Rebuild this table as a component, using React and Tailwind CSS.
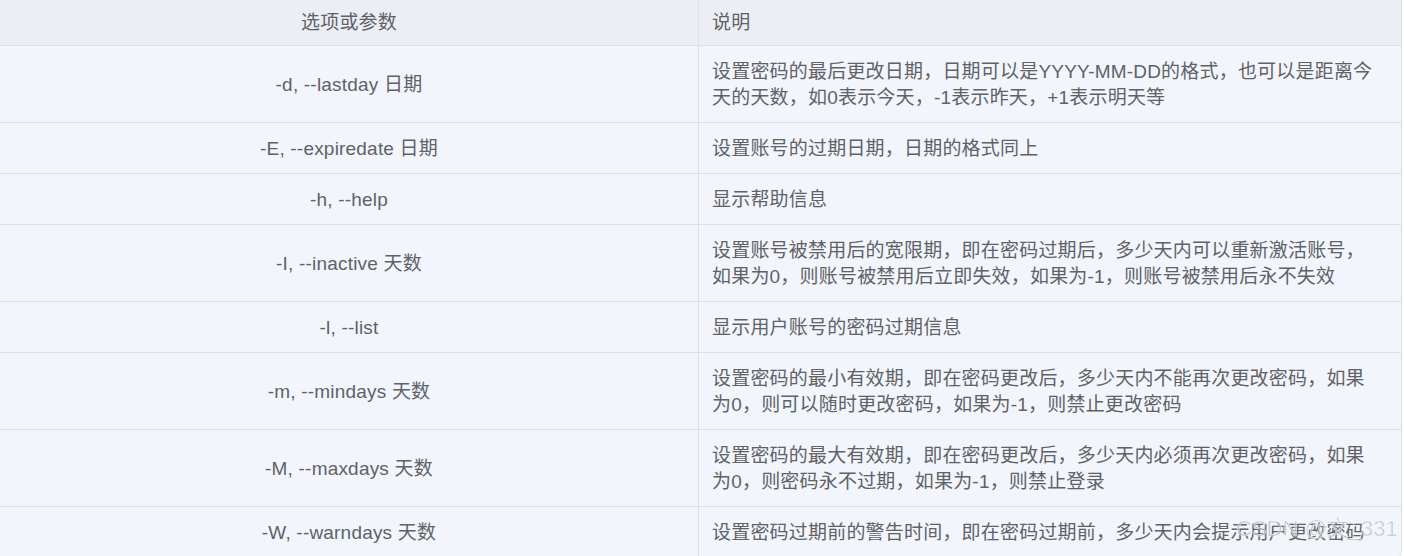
const rows = [
  { opt: '-d, --lastday 日期', desc: ['设置密码的最后更改日期，日期可以是YYYY-MM-DD的格式，也可以是距离今', '天的天数，如0表示今天，-1表示昨天，+1表示明天等'] },
  { opt: '-E, --expiredate 日期', desc: ['设置账号的过期日期，日期的格式同上'] },
  { opt: '-h, --help', desc: ['显示帮助信息'] },
  { opt: '-I, --inactive 天数', desc: ['设置账号被禁用后的宽限期，即在密码过期后，多少天内可以重新激活账号，', '如果为0，则账号被禁用后立即失效，如果为-1，则账号被禁用后永不失效'] },
  { opt: '-l, --list', desc: ['显示用户账号的密码过期信息'] },
  { opt: '-m, --mindays 天数', desc: ['设置密码的最小有效期，即在密码更改后，多少天内不能再次更改密码，如果', '为0，则可以随时更改密码，如果为-1，则禁止更改密码'] },
  { opt: '-M, --maxdays 天数', desc: ['设置密码的最大有效期，即在密码更改后，多少天内必须再次更改密码，如果', '为0，则密码永不过期，如果为-1，则禁止登录'] },
  { opt: '-W, --warndays 天数', desc: ['设置密码过期前的警告时间，即在密码过期前，多少天内会提示用户更改密码'] },
];

const font = { fontFamily: '"Liberation Sans", Arial, "Noto Sans CJK SC", sans-serif' };

export default function App() {
  return (
    <div className="relative w-[1404px] h-[556px] overflow-hidden bg-white" style={font}>
      <div className="w-[1402px] border-r border-b border-[#dcdfe6] rounded-br-[6px] overflow-hidden text-[19px] leading-[26px] text-[#606266] tracking-[0.2px]">
        <div className="grid grid-cols-[699px_1fr] bg-[#ebeef5] border-b border-[#dcdfe6]">
          <div className="pt-[10px] pb-[9px] text-center border-r border-[#dcdfe6]">选项或参数</div>
          <div className="pt-[10px] pb-[9px] px-[13px]">说明</div>
        </div>
        {rows.map((r, i) => (
          <div
            key={r.opt}
            className={`grid grid-cols-[699px_1fr] bg-[#f2f5fc] ${i < rows.length - 1 ? 'border-b border-[#dcdfe6]' : ''}`}
          >
            <div className="flex items-center justify-center pt-[13px] pb-[11px] border-r border-[#dcdfe6]">{r.opt}</div>
            <div className="pt-[13px] pb-[11px] px-[13px]">
              {r.desc.map((line) => (
                <div key={line} className="whitespace-nowrap">{line}</div>
              ))}
            </div>
          </div>
        ))}
      </div>
      {/* watermark */}
      <span className="pointer-events-none absolute left-[1236px] top-[515px] text-[22px] leading-[28px] text-[#a8a8a8]/70 whitespace-nowrap [-webkit-text-stroke:0.6px_rgba(255,255,255,0.8)]">
        CSDN @文_331
      </span>
    </div>
  );
}
